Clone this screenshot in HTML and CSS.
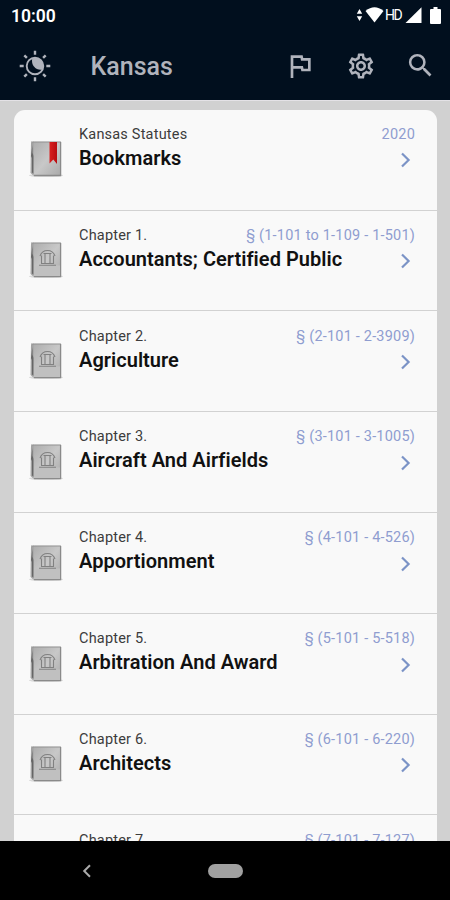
FILE: index.html
```html
<!DOCTYPE html>
<html lang="en">
<head>
  <meta charset="UTF-8">
  <meta name="viewport" content="width=device-width, initial-scale=1.0">
  <title>Kansas Statutes</title>
  <link rel="stylesheet" href="styles.css">
</head>
<body>

  <svg class="defs" width="0" height="0">
    <defs>
      <linearGradient id="cover" x1="0" y1="0" x2="1" y2="1">
        <stop offset="0" stop-color="#adadad"/>
        <stop offset="0.5" stop-color="#c8c8c8"/>
        <stop offset="1" stop-color="#a9a9a9"/>
      </linearGradient>
      <linearGradient id="ribbon" x1="0" y1="0" x2="1" y2="0">
        <stop offset="0" stop-color="#d8201f"/>
        <stop offset="1" stop-color="#b80c10"/>
      </linearGradient>
    </defs>
    <symbol id="book" viewBox="0 0 36 38">
      <ellipse cx="18" cy="34.500" rx="17" ry="1.600" fill="#d9d9d9"/>
      <path d="M3 1.500L6 .5V35L2.500 32z" fill="#a2a2a2"/>
      <path d="M4.500 4v8l1.500 3v18l-2-1.500V17l-1-2z" fill="#666"/>
      <rect x="5.500" y=".7" width="27.500" height="34.300" rx="1" fill="url(#cover)"/>
      <path d="M3 1h30" stroke="#8f8f8f" stroke-width=".9"/>
      <path d="M32.600 1v33.500H6" fill="none" stroke="#8a8a8a" stroke-width="1.300"/>
    </symbol>
    <symbol id="law" viewBox="0 0 36 38">
      <use href="#book" width="36" height="38"/>
      <path d="M6 23.500h26V34H6z" fill="#c0c0c0"/>
      <path d="M11 23.300h17M13 21.500h13M13.500 13.500v8M17 11v10.500M22 11v10.500M25.500 13.500v8M12 14q2-5.500 7.500-5.500T27 14M15.500 11.500h8" fill="none" stroke="#818181" stroke-width="1.100"/>
    </symbol>
    <symbol id="arrow" viewBox="0 0 12 18">
      <path d="M2 2.500L8.600 9L2 15.500" fill="none" stroke="currentColor" stroke-width="2.200"/>
    </symbol>
  </svg>

  <header>
    <div class="status">
      <span class="time">10:00</span>
      <div class="signals">
        <svg width="7" height="14" viewBox="0 0 7 14"><path d="M3.500 1L6.200 5.700H.8zM3.500 13L.8 8.300h5.400z" fill="#fff"/></svg>
        <svg class="wifi" width="19" height="16" viewBox="0 0 19 16"><path d="M.5 4Q9.500-3.500 18.500 4L9.500 15.500z" fill="#fff"/></svg>
        <span class="hd">HD</span>
        <svg class="cell" width="17" height="16" viewBox="0 0 17 16"><path d="M16.500.3V16H.5z" fill="#fff"/></svg>
        <svg class="battery" width="11" height="17" viewBox="0 0 11 17"><path d="M3.500 0h4v2H10q1 0 1 1v13q0 1-1 1H1q-1 0-1-1V3q0-1 1-1h2.500z" fill="#fff"/></svg>
      </div>
    </div>
    <div class="toolbar">
      <svg class="sun" width="32" height="32" viewBox="0 0 32 32">
        <circle cx="16" cy="16" r="8.300" fill="none" stroke="currentColor" stroke-width="1.900"/>
        <path d="M13.300 8.200A8.300 8.300 0 0 1 23.500 19.500C18 21 11.500 16 13.300 8.200z" fill="currentColor"/>
        <path d="M16 .7v4M16 27.300v4M.7 16h4M27.300 16h4M5.300 5.300l2.600 2.600M24.100 24.100l2.600 2.600M5.300 26.700l2.600-2.600M24.100 7.900l2.600-2.600" stroke="currentColor" stroke-width="2.400"/>
      </svg>
      <h1>Kansas</h1>
      <svg class="flag" width="32" height="32" viewBox="0 0 24 24"><path d="M12.360 6l.4 2H18v6h-3.360l-.4-2H7V6h5.360M14 4H5v17h2v-7h5.600l.4 2h7V6h-5.600L14 4z" fill="currentColor"/></svg>
      <svg class="gear" width="30" height="30" viewBox="0 0 24 24"><path fill="currentColor" d="M19.430 12.980c.04-.32.07-.64.07-.98 0-.34-.03-.66-.07-.98l2.110-1.650c.19-.15.24-.42.12-.64l-2-3.460c-.09-.16-.26-.25-.44-.25-.06 0-.12.01-.17.03l-2.490 1c-.52-.4-1.080-.73-1.690-.98l-.38-2.650C14.460 2.180 14.250 2 14 2h-4c-.25 0-.46.18-.49.42l-.38 2.650c-.61.25-1.170.59-1.690.98l-2.490-1c-.06-.02-.12-.03-.18-.03-.17 0-.34.09-.43.25l-2 3.460c-.13.22-.07.49.12.64l2.110 1.650c-.04.32-.07.65-.07.98 0 .33.03.66.07.98l-2.110 1.650c-.19.15-.24.42-.12.64l2 3.460c.09.16.26.25.44.25.06 0 .12-.01.17-.03l2.490-1c.52.4 1.080.73 1.690.98l.38 2.650c.03.24.24.42.49.42h4c.25 0 .46-.18.49-.42l.38-2.650c.61-.25 1.170-.59 1.690-.98l2.490 1c.06.02.12.03.18.03.17 0 .34-.09.43-.25l2-3.460c.12-.22.07-.49-.12-.64l-2.110-1.650zm-1.980-1.710c.04.31.05.52.05.73 0 .21-.02.43-.05.73l-.14 1.130.89.7 1.080.84-.7 1.210-1.270-.51-1.040-.42-.9.68c-.43.32-.84.56-1.250.73l-1.060.43-.16 1.130-.2 1.350h-1.400l-.19-1.350-.16-1.130-1.060-.43c-.43-.18-.83-.41-1.230-.71l-.91-.7-1.060.43-1.270.51-.7-1.210 1.080-.84.89-.7-.14-1.130c-.03-.31-.05-.54-.05-.74s.02-.43.05-.73l.14-1.130-.89-.7-1.080-.84.7-1.210 1.270.51 1.040.42.9-.68c.43-.32.84-.56 1.250-.73l1.060-.43.16-1.130.2-1.350h1.390l.19 1.350.16 1.130 1.060.43c.43.18.83.41 1.230.71l.91.7 1.060-.43 1.270-.51.7 1.210-1.070.85-.89.7.14 1.130zM12 8c-2.210 0-4 1.790-4 4s1.790 4 4 4 4-1.790 4-4-1.790-4-4-4zm0 6c-1.100 0-2-.9-2-2s.9-2 2-2 2 .9 2 2-.9 2-2 2z"/></svg>
      <svg class="search" width="31" height="31" viewBox="0 0 24 24"><path fill="currentColor" d="M15.500 14h-.79l-.28-.27A6.470 6.470 0 0 0 16 9.500 6.500 6.500 0 1 0 9.500 16c1.610 0 3.090-.59 4.230-1.570l.27.28v.79l5 4.990L20.490 19l-4.990-5zm-6 0C7.010 14 5 11.990 5 9.500S7.010 5 9.500 5 14 7.010 14 9.500 11.990 14 9.500 14z"/></svg>
    </div>
  </header>

  <main>
    <div class="list">
      <div class="row">
        <svg class="book" width="36" height="38" viewBox="0 0 36 38">
          <use href="#book" width="36" height="38"/>
          <path d="M21.500 1H29v22l-3.700-4.500L21.500 22.500z" fill="url(#ribbon)"/>
        </svg>
        <div class="info">
          <div class="line"><span>Kansas Statutes</span><span class="range">2020</span></div>
          <div class="title"><b>Bookmarks</b><svg class="arrow" width="12" height="18"><use href="#arrow"/></svg></div>
        </div>
      </div>
      <div class="row">
        <svg class="book" width="36" height="38"><use href="#law"/></svg>
        <div class="info">
          <div class="line"><span>Chapter 1.</span><span class="range">§ (1-101 to 1-109 - 1-501)</span></div>
          <div class="title"><b>Accountants; Certified Public</b><svg class="arrow" width="12" height="18"><use href="#arrow"/></svg></div>
        </div>
      </div>
      <div class="row">
        <svg class="book" width="36" height="38"><use href="#law"/></svg>
        <div class="info">
          <div class="line"><span>Chapter 2.</span><span class="range">§ (2-101 - 2-3909)</span></div>
          <div class="title"><b>Agriculture</b><svg class="arrow" width="12" height="18"><use href="#arrow"/></svg></div>
        </div>
      </div>
      <div class="row">
        <svg class="book" width="36" height="38"><use href="#law"/></svg>
        <div class="info">
          <div class="line"><span>Chapter 3.</span><span class="range">§ (3-101 - 3-1005)</span></div>
          <div class="title"><b>Aircraft And Airfields</b><svg class="arrow" width="12" height="18"><use href="#arrow"/></svg></div>
        </div>
      </div>
      <div class="row">
        <svg class="book" width="36" height="38"><use href="#law"/></svg>
        <div class="info">
          <div class="line"><span>Chapter 4.</span><span class="range">§ (4-101 - 4-526)</span></div>
          <div class="title"><b>Apportionment</b><svg class="arrow" width="12" height="18"><use href="#arrow"/></svg></div>
        </div>
      </div>
      <div class="row">
        <svg class="book" width="36" height="38"><use href="#law"/></svg>
        <div class="info">
          <div class="line"><span>Chapter 5.</span><span class="range">§ (5-101 - 5-518)</span></div>
          <div class="title"><b>Arbitration And Award</b><svg class="arrow" width="12" height="18"><use href="#arrow"/></svg></div>
        </div>
      </div>
      <div class="row">
        <svg class="book" width="36" height="38"><use href="#law"/></svg>
        <div class="info">
          <div class="line"><span>Chapter 6.</span><span class="range">§ (6-101 - 6-220)</span></div>
          <div class="title"><b>Architects</b><svg class="arrow" width="12" height="18"><use href="#arrow"/></svg></div>
        </div>
      </div>
      <div class="row">
        <div class="info last">
          <div class="line"><span>Chapter 7.</span><span class="range">§ (7-101 - 7-127)</span></div>
        </div>
      </div>
    </div>
  </main>

  <nav>
    <svg class="back" width="10" height="14" viewBox="0 0 10 14"><path d="M8 1.200L2.200 7L8 12.800" fill="none" stroke="#aaa" stroke-width="2"/></svg>
    <div class="pill"></div>
  </nav>

</body>
</html>
```
FILE: styles.css
```css
* {
  box-sizing: border-box;
}

body {
  margin: 0;
  width: 450px;
  height: 900px;
  overflow: hidden;
  display: flex;
  flex-direction: column;
  font-family: Roboto, sans-serif;
  background: #d1d1d1;
}

svg {
  display: block;
  flex: none;
}

.defs {
  position: absolute;
}

header {
  height: 100px;
  flex: none;
  background: #010f1e;
  color: #b0b3bc;
}

.status {
  height: 32px;
  padding: 0 9px 0 11px;
  display: flex;
  align-items: center;
  justify-content: space-between;
  color: #fff;
}

.time {
  font-size: 17.500px;
  font-weight: 600;
}

.signals {
  display: flex;
  align-items: center;
  height: 18px;
  margin-top: -2px;
}

.wifi {
  margin-left: 2px;
}

.hd {
  font-size: 14px;
  width: 16px;
  margin: 0 4px 0 1px;
  letter-spacing: -1.500px;
}

.battery {
  margin-left: 8px;
}

.toolbar {
  height: 67px;
  padding: 0 14px 0 19.500px;
  display: flex;
  align-items: center;
}

.sun {
  margin-left: -0.500px;
}

h1 {
  margin: 2px auto 0 39.500px;
  font-size: 25px;
  font-weight: 500;
}

.flag {
  margin-right: 0.500px;
}

.gear {
  margin-left: 29px;
}

.search {
  margin-left: 29.500px;
}

main {
  flex: 1;
  min-height: 0;
  overflow: hidden;
  border-top: 1px solid #e4e2e6;
  padding: 8.700px 13px 0 14px;
}

.list {
  background: #f9f9f9;
  border-radius: 11px 11px 0 0;
}

.row {
  height: 100.830px;
  padding: 16.200px 22px 0 14px;
  display: flex;
  border-bottom: 1px solid #d2d2d2;
}

.book {
  margin: 15.500px 15px 0 0;
}

.info {
  flex: 1;
}

.last {
  margin-left: 51px;
}

.line {
  display: flex;
  justify-content: space-between;
  font-size: 14.500px;
  line-height: 18px;
  letter-spacing: 0.200px;
  color: #3c3c3c;
}

.range {
  color: #8f9dd0;
}

.title {
  display: flex;
  justify-content: space-between;
  font-size: 20px;
  line-height: 28px;
  color: #111;
}

.title b {
  font-weight: 600;
  letter-spacing: 0.030px;
}

.arrow {
  margin: 7.500px 3.500px 0 0;
  color: #7b93c6;
}

nav {
  height: 59px;
  flex: none;
  background: #000;
  display: flex;
  align-items: center;
}

.back {
  margin-left: 82px;
}

.pill {
  width: 35px;
  height: 14px;
  margin-left: 116px;
  border-radius: 7px;
  background: #a0a0a0;
}
```
